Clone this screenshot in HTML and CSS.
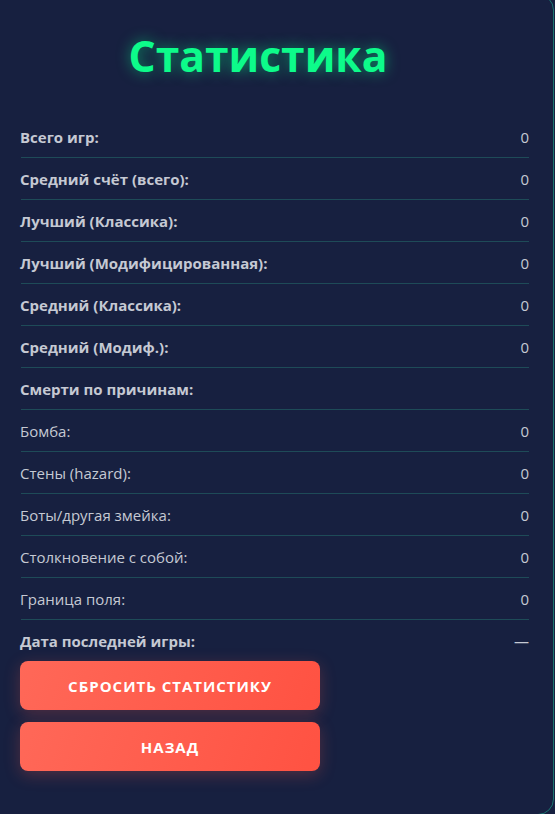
FILE: index.html
```html
<!DOCTYPE html>
<html lang="ru">
<head>
<meta charset="utf-8">
<link rel="stylesheet" href="styles.css">
</head>
<body>
<div class="card">
  <h1 class="title">Статистика</h1>
  <div class="stats">
    <div class="row"><span class="label strong">Всего игр:</span><span class="value">0</span></div>
    <div class="row"><span class="label strong">Средний счёт (всего):</span><span class="value">0</span></div>
    <div class="row"><span class="label strong">Лучший (Классика):</span><span class="value">0</span></div>
    <div class="row"><span class="label strong">Лучший (Модифицированная):</span><span class="value">0</span></div>
    <div class="row"><span class="label strong">Средний (Классика):</span><span class="value">0</span></div>
    <div class="row"><span class="label strong">Средний (Модиф.):</span><span class="value">0</span></div>
    <div class="row"><span class="label strong">Смерти по причинам:</span><span class="value"></span></div>
    <div class="row"><span class="label">Бомба:</span><span class="value">0</span></div>
    <div class="row"><span class="label">Стены (hazard):</span><span class="value">0</span></div>
    <div class="row"><span class="label">Боты/другая змейка:</span><span class="value">0</span></div>
    <div class="row"><span class="label">Столкновение с собой:</span><span class="value">0</span></div>
    <div class="row"><span class="label">Граница поля:</span><span class="value">0</span></div>
    <div class="row last"><span class="label strong">Дата последней игры:</span><span class="value">—</span></div>
  </div>
  <div class="actions">
    <button class="btn">Сбросить статистику</button>
    <button class="btn">Назад</button>
  </div>
</div>
</body>
</html>
```
FILE: styles.css
```css
html, body {
  margin: 0;
  padding: 0;
  background: #172040;
  height: 814px;
  overflow: hidden;
}
body {
  font-family: "Open Sans", "Noto Sans", sans-serif;
  color: #c5c9d3;
}
.card {
  box-sizing: border-box;
  margin: -6px 1px 0 -40px;
  height: 821px;
  border: 1px solid #1b7470;
  border-radius: 16px;
  background: #172040;
  padding: 0 24px 0 60px;
}
.title {
  margin: 0 0 0 -60px;
  padding: 36px 0 0 26px;
  height: 85px;
  box-sizing: content-box;
  text-align: center;
  font-family: "Open Sans", sans-serif;
  font-weight: 700;
  font-size: 42.6px;
  line-height: 48px;
  color: #0dfb8a;
  text-shadow: 0 0 14px rgba(0, 255, 136, 0.5);
}
.stats {
  display: flex;
  flex-direction: column;
}
.row {
  display: flex;
  justify-content: space-between;
  align-items: center;
  height: 41px;
  border-bottom: 1px solid #1e4b58;
  font-size: 15px;
}
.row.last {
  border-bottom: none;
}
.label {
  margin-left: -1px;
}
.label.strong {
  font-weight: 700;
}
.value {
  color: #c5c9d3;
}
.actions {
  display: flex;
  flex-direction: column;
  gap: 12px;
  align-items: flex-start;
}
.btn {
  width: 300px;
  height: 49px;
  margin-left: -1px;
  border: none;
  border-radius: 8px;
  background: linear-gradient(110deg, #ff6858, #ff5242);
  color: #fff;
  font-family: "Open Sans", sans-serif;
  font-weight: 700;
  font-size: 15px;
  letter-spacing: 1px;
  text-transform: uppercase;
  box-shadow: 0 4px 16px rgba(255, 90, 70, 0.25);
}
```
